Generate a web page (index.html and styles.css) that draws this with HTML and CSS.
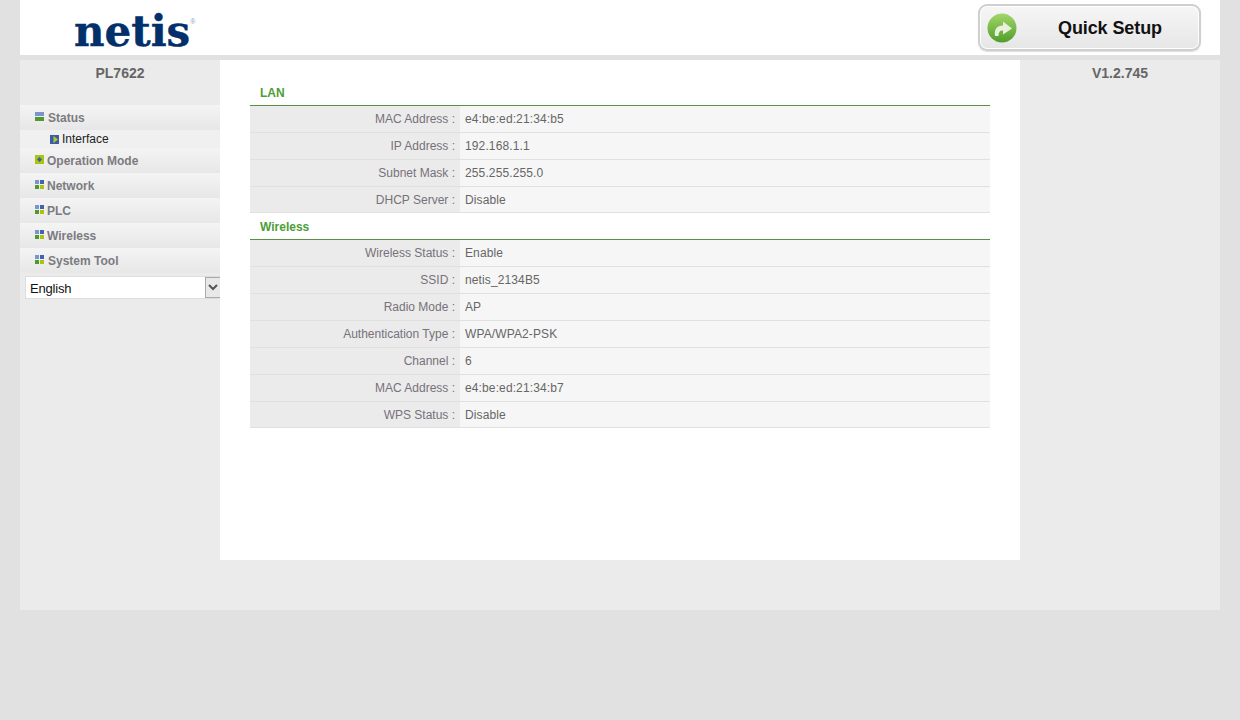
FILE: index.html
```html
<!DOCTYPE html>
<html lang="en">
<head>
  <meta charset="UTF-8">
  <title>netis PL7622</title>
  <link rel="stylesheet" href="styles.css">
</head>
<body>
  <div class="page">
    <header class="top-bar">
      <div class="logo">netis<sup class="logo-mark">®</sup></div>
      <button class="quick-setup">
        <svg class="quick-icon" width="30" height="30" viewBox="0 0 30 30">
          <defs>
            <linearGradient id="qs" x1="0" y1="0" x2="0" y2="1">
              <stop offset="0" stop-color="#a5d66a"/>
              <stop offset="1" stop-color="#4f9e2a"/>
            </linearGradient>
          </defs>
          <circle cx="15" cy="15" r="14.5" fill="url(#qs)"/>
          <path d="M8 23C7 16 10 12.500 16 12.500V8.500L25 15.500 16 21.500V17.500C13 17 11.500 19 11.500 23z" fill="#e9f1de"/>
        </svg>
        <span class="quick-label">Quick Setup</span>
      </button>
    </header>

    <div class="main">
      <aside class="side">
        <div class="model">PL7622</div>
        <nav class="menu">
          <a class="menu-item">
            <svg class="icon wide-gap" width="9" height="9" viewBox="0 0 9 9"><rect width="9" height="4" fill="#7c93cb"/><rect y="5" width="9" height="4" fill="#4f9a2e"/></svg>
            Status
          </a>
          <a class="sub-item">
            <svg class="icon sub-icon" width="9" height="9" viewBox="0 0 9 9"><rect width="9" height="9" fill="#3a5cae"/><path d="M3.500 1 8 4.500 3.500 8z" fill="#b5cc12"/></svg>
            Interface
          </a>
          <a class="menu-item">
            <svg class="icon" width="9" height="9" viewBox="0 0 9 9"><rect width="9" height="9" fill="#a9c30f"/><path d="M4.500 2 7 4.500 4.500 7 2 4.500z" fill="#3a5cae"/></svg>
            Operation Mode
          </a>
          <a class="menu-item">
            <svg class="icon" width="9" height="9" viewBox="0 0 9 9"><rect width="4" height="4" fill="#7c93cb"/><rect x="5" width="4" height="4" fill="#3f62b2"/><rect y="5" width="4" height="4" fill="#4f9a2e"/><rect x="5" y="5" width="4" height="4" fill="#a9c30f"/></svg>
            Network
          </a>
          <a class="menu-item">
            <svg class="icon" width="9" height="9" viewBox="0 0 9 9"><rect width="4" height="4" fill="#7c93cb"/><rect x="5" width="4" height="4" fill="#3f62b2"/><rect y="5" width="4" height="4" fill="#4f9a2e"/><rect x="5" y="5" width="4" height="4" fill="#a9c30f"/></svg>
            PLC
          </a>
          <a class="menu-item">
            <svg class="icon" width="9" height="9" viewBox="0 0 9 9"><rect width="4" height="4" fill="#7c93cb"/><rect x="5" width="4" height="4" fill="#3f62b2"/><rect y="5" width="4" height="4" fill="#4f9a2e"/><rect x="5" y="5" width="4" height="4" fill="#a9c30f"/></svg>
            Wireless
          </a>
          <a class="menu-item">
            <svg class="icon wide-gap" width="9" height="9" viewBox="0 0 9 9"><rect width="4" height="4" fill="#7c93cb"/><rect x="5" width="4" height="4" fill="#3f62b2"/><rect y="5" width="4" height="4" fill="#4f9a2e"/><rect x="5" y="5" width="4" height="4" fill="#a9c30f"/></svg>
            System Tool
          </a>
        </nav>
        <div class="lang">
          <select class="lang-select">
            <option>English</option>
          </select>
          <span class="lang-arrow">
            <svg width="10" height="7" viewBox="0 0 10 7"><path d="M1 1l4 4 4-4" fill="none" stroke="#555" stroke-width="2"/></svg>
          </span>
        </div>
      </aside>

      <section class="content">
        <h2 class="group-title">LAN</h2>
        <div class="rows">
          <div class="row"><div class="key">MAC Address :</div><div class="val">e4:be:ed:21:34:b5</div></div>
          <div class="row"><div class="key">IP Address :</div><div class="val">192.168.1.1</div></div>
          <div class="row"><div class="key">Subnet Mask :</div><div class="val">255.255.255.0</div></div>
          <div class="row"><div class="key">DHCP Server :</div><div class="val">Disable</div></div>
        </div>
        <h2 class="group-title">Wireless</h2>
        <div class="rows">
          <div class="row"><div class="key">Wireless Status :</div><div class="val">Enable</div></div>
          <div class="row"><div class="key">SSID :</div><div class="val">netis_2134B5</div></div>
          <div class="row"><div class="key">Radio Mode :</div><div class="val">AP</div></div>
          <div class="row"><div class="key">Authentication Type :</div><div class="val">WPA/WPA2-PSK</div></div>
          <div class="row"><div class="key">Channel :</div><div class="val">6</div></div>
          <div class="row"><div class="key">MAC Address :</div><div class="val">e4:be:ed:21:34:b7</div></div>
          <div class="row"><div class="key">WPS Status :</div><div class="val">Disable</div></div>
        </div>
      </section>

      <aside class="side">
        <div class="model">V1.2.745</div>
      </aside>
    </div>
  </div>
</body>
</html>
```

FILE: styles.css
```css
* {
  margin: 0;
  padding: 0;
  box-sizing: border-box;
}

body {
  background: #e1e1e1;
  font-family: "Liberation Sans", Arial, sans-serif;
  font-size: 12px;
  color: #666;
}

.page {
  width: 1200px;
  margin: 0 auto;
}

.top-bar {
  height: 55px;
  background: #fff;
  display: flex;
  justify-content: space-between;
  align-items: flex-start;
  padding: 4px 19px 0 54px;
}

.logo {
  font-family: "DejaVu Serif", serif;
  font-weight: bold;
  font-size: 42px;
  line-height: 55px;
  color: #03306b;
  -webkit-text-stroke: 0.4px #03306b;
}

.logo-mark {
  font-family: "Liberation Sans", sans-serif;
  font-size: 7px;
  font-weight: normal;
  line-height: 0;
  color: #8fa3bd;
  -webkit-text-stroke: 0;
  vertical-align: 22px;
}

.quick-setup {
  width: 223px;
  height: 47px;
  display: flex;
  align-items: center;
  padding-left: 7px;
  background: linear-gradient(#f6f6f6, #e6e6e6);
  border: 2px solid #cfcfcf;
  border-radius: 9px;
  box-shadow: inset 0 0 0 1px #fff, 0 1px 1px #ddd;
  font-family: inherit;
}

.quick-label {
  margin-left: 41px;
  padding-top: 2px;
  font-size: 18px;
  font-weight: bold;
  letter-spacing: -0.1px;
  color: #111;
}

.main {
  margin-top: 5px;
  height: 550px;
  background: #ebebeb;
  display: flex;
  align-items: flex-start;
}

.side {
  width: 200px;
}

.model {
  height: 45px;
  padding-top: 5px;
  text-align: center;
  font-size: 14px;
  font-weight: bold;
  color: #666;
}

.menu-item,
.sub-item {
  display: flex;
  align-items: center;
}

.menu-item {
  height: 25px;
  padding-left: 15px;
  background: linear-gradient(#f4f4f4, #e7e7e7);
  font-weight: bold;
  color: #7b7b80;
}

.sub-item {
  height: 18px;
  padding-left: 30px;
  background: #f0f0f0;
  color: #222;
}

.icon {
  margin-right: 3px;
  margin-top: -2px;
}

.sub-icon {
  margin-top: 1px;
}

.wide-gap {
  margin-right: 4px;
}

.lang {
  display: flex;
  height: 23px;
  margin: 3px 0 0 5px;
  background: #fff;
  border: 1px solid #ddd;
  border-right: 0;
}

.lang-select {
  flex: 1;
  appearance: none;
  border: 0;
  background: #fff;
  padding: 1px 0 0 4px;
  font-family: inherit;
  font-size: 13px;
  letter-spacing: -0.2px;
  color: #111;
}

.lang-arrow {
  width: 15px;
  display: flex;
  align-items: center;
  justify-content: center;
  background: #e8e8e8;
  border: 1px solid #aaa;
  border-right: 0;
}

.content {
  width: 800px;
  height: 500px;
  background: #fff;
  padding: 20px 30px 0;
}

.group-title {
  height: 26px;
  padding-left: 10px;
  line-height: 26px;
  font-size: 12px;
  font-weight: bold;
  color: #4c9e36;
  border-bottom: 1px solid #5a8f48;
}

.rows + .group-title {
  height: 27px;
  padding-top: 1px;
}

.row {
  height: 27px;
  display: flex;
  border-bottom: 1px solid #e0e0e0;
  line-height: 26px;
}

.row:last-child {
  height: 26px;
}

.key {
  width: 210px;
  padding-right: 5px;
  background: #ebebeb;
  text-align: right;
  color: #77717a;
}

.val {
  flex: 1;
  padding-left: 5px;
  background: #f6f6f6;
  color: #666;
  letter-spacing: 0.12px;
}
```
